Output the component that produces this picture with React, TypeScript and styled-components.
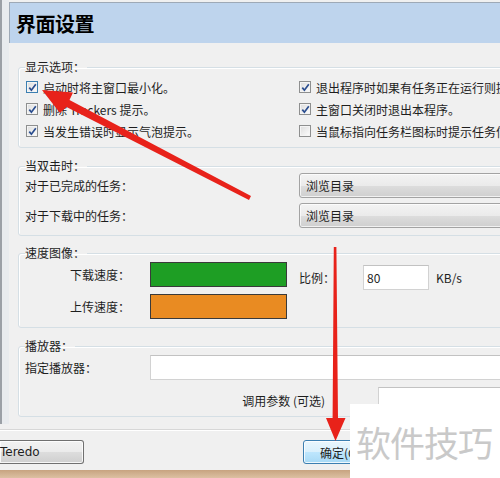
import React from 'react';
import styled, { createGlobalStyle } from 'styled-components';

const Global = createGlobalStyle`
  html, body { margin: 0; padding: 0; width: 500px; height: 478px; overflow: hidden; background: #f0f0f0; }
  body { font-family: "Noto Sans CJK SC", "Microsoft YaHei", sans-serif; font-size: 12px; color: #1e1e1e; }
  * { box-sizing: border-box; }
`;

const Screen = styled.div`
  position: relative;
  width: 500px;
  height: 478px;
  overflow: hidden;
  display: flex;
  flex-direction: column;
  background: #f0f0f0;
`;

const Upper = styled.div`
  display: flex;
  height: 429px;
  flex-shrink: 0;
`;

const Frame = styled.div`
  width: 9px;
  flex-shrink: 0;
  height: 424px;
  background: linear-gradient(to right, #9ba0a6 0, #9ba0a6 2px, #e8ebee 2px, #e8ebee 100%);
`;

const Main = styled.div`
  width: 640px;
  flex-shrink: 0;
  display: flex;
  flex-direction: column;
  padding-top: 2px;
`;

const Header = styled.div`
  height: 41px;
  border-top: 1px solid #9ea9b6;
  border-left: 1px solid #9ea9b6;
  background: #bed4ed;
  display: flex;
  align-items: center;
  padding-left: 6px;
  font-size: 20px;
  font-weight: bold;
  color: #000;
  letter-spacing: -0.5px;
`;

const Body = styled.div`
  padding-left: 9px;
  display: flex;
  flex-direction: column;
`;

const Group = styled.fieldset<{ $mt: number; $pt: number; $pb: number }>`
  margin: ${(p) => p.$mt}px 0 0 0;
  border: 1px solid #d5dfe5;
  border-radius: 3px;
  padding: ${(p) => p.$pt}px 0 ${(p) => p.$pb}px 6px;
  box-shadow: inset 1px 1px 0 #fff;
  min-width: 0;
`;

const Legend = styled.legend`
  padding: 0 2px 0 0;
  margin-left: 0;
  line-height: 14px;
  font-size: 12px;
  color: #1e1e1e;
`;

const CheckGrid = styled.div`
  display: grid;
  grid-template-columns: 273px 320px;
  grid-auto-rows: 22px;
  align-items: center;
`;

const CheckItem = styled.label`
  display: flex;
  align-items: center;
  gap: 5px;
  padding-left: 1px;
  white-space: nowrap;
`;

const Box = styled.span<{ $focus?: boolean }>`
  width: 12px;
  height: 12px;
  border: 1px solid ${(p) => (p.$focus ? '#3c7fb1' : '#8e8f8f')};
  background: linear-gradient(135deg, #dcdcdc, #fdfdfd);
  box-shadow: inset 0 0 0 1px #f4f4f4;
  display: inline-flex;
  align-items: center;
  justify-content: center;
  flex-shrink: 0;
`;

const Check = () => (
  <svg width="9" height="9" viewBox="0 0 9 9">
    <path d="M1.3 4.6 L3.4 7.2 L7.8 1.2" fill="none" stroke="#2a4d8f" strokeWidth="1.7" />
  </svg>
);

const CheckBox = ({ checked, focus, label }: { checked: boolean; focus?: boolean; label: string }) => (
  <CheckItem>
    <Box $focus={focus}>{checked && <Check />}</Box>
    <span>{label}</span>
  </CheckItem>
);

const FormGrid = styled.div`
  display: grid;
  grid-template-columns: 274px 320px;
  grid-auto-rows: 25px;
  row-gap: 5px;
  align-items: center;
`;

const Select = styled.div`
  height: 25px;
  border: 1px solid #a3a3a3;
  border-radius: 3px;
  background: linear-gradient(#f3f3f3 0%, #ebebeb 50%, #dddddd 51%, #cfcfcf 100%);
  box-shadow: inset 0 0 0 1px rgba(255, 255, 255, 0.7);
  display: flex;
  align-items: center;
  padding-left: 6px;
`;

const SpeedRows = styled.div`
  display: flex;
  flex-direction: column;
  gap: 7px;
`;

const SpeedRow = styled.div`
  display: flex;
  align-items: center;
  height: 25px;
`;

const SpeedLabel = styled.span`
  width: 105px;
  text-align: right;
  margin-right: 20px;
`;

const Swatch = styled.div<{ $color: string }>`
  width: 137px;
  height: 25px;
  border: 1px solid #3a3a3a;
  background: ${(p) => p.$color};
`;

const RatioLabel = styled.span`
  margin-left: 12px;
  width: 64px;
  position: relative;
  top: 3px;
`;

const TextInput = styled.div<{ $w: number }>`
  width: ${(p) => p.$w}px;
  height: 25px;
  background: #fff;
  border: 1px solid #d2d2d2;
  border-top-color: #c2c2c2;
  display: flex;
  align-items: center;
  padding-left: 3px;
  flex-shrink: 0;
`;

const RatioInput = styled(TextInput)`
  position: relative;
  top: 3px;
`;

const Unit = styled.span`
  margin-left: 7px;
  position: relative;
  top: 3px;
`;

const PlayerRows = styled.div`
  display: flex;
  flex-direction: column;
  gap: 7px;
`;

const PlayerRow = styled.div`
  display: flex;
  align-items: center;
  height: 25px;
`;

const PlayerLabel = styled.span`
  width: 125px;
`;

const ParamLabel = styled.span`
  width: 300px;
  text-align: right;
  margin-right: 53px;
  position: relative;
  top: 1px;
`;

const Footer = styled.div`
  height: 41px;
  flex-shrink: 0;
  border-top: 1px solid #d7d7d7;
  box-shadow: inset 0 1px 0 #fff;
  display: flex;
  align-items: flex-start;
  padding-top: 10px;
`;

const Button = styled.div<{ $default?: boolean; $w: number }>`
  width: ${(p) => p.$w}px;
  height: 24px;
  border: 1px solid ${(p) => (p.$default ? '#3c7fb1' : '#707070')};
  border-radius: 3px;
  background: ${(p) =>
    p.$default
      ? 'linear-gradient(#eaf6fd 0%, #d9f0fc 50%, #bee6fd 51%, #a7d9f5 100%)'
      : 'linear-gradient(#f2f2f2 0%, #ebebeb 50%, #dddddd 51%, #cfcfcf 100%)'};
  box-shadow: inset 0 0 0 1px rgba(255, 255, 255, 0.8);
  display: flex;
  align-items: center;
  font-size: 12px;
  flex-shrink: 0;
`;

const TeredoButton = styled(Button)`
  border-left: none;
  border-top-left-radius: 0;
  border-bottom-left-radius: 0;
  padding-left: 0;
  font-family: "DejaVu Sans", "Noto Sans", sans-serif;
`;

const OkButton = styled(Button)`
  margin-left: 219px;
  padding-left: 16px;
`;

const BottomStrip = styled.div`
  flex: 1;
  background: linear-gradient(#c7a380, #dcc0a2);
`;

const Watermark = styled.div`
  position: absolute;
  left: 350px;
  top: 404px;
  width: 150px;
  height: 74px;
  background: #fff;
  display: flex;
  align-items: center;
  padding-left: 6px;
  font-size: 35px;
  color: #c9c9c9;
  letter-spacing: -1px;
  font-family: "Noto Sans CJK SC", sans-serif;
`;

const Overlay = styled.svg`
  position: absolute;
  left: 0;
  top: 0;
  pointer-events: none;
`;

export default function App() {
  return (
    <Screen>
      <Global />
      <Upper>
        <Frame />
        <Main>
          <Header>界面设置</Header>
          <Body>
            <Group $mt={17} $pt={2} $pb={5}>
              <Legend>显示选项：</Legend>
              <CheckGrid>
                <CheckBox checked focus label="启动时将主窗口最小化。" />
                <CheckBox checked label="退出程序时如果有任务正在运行则提示。" />
                <CheckBox checked label="删除 Trackers 提示。" />
                <CheckBox checked label="主窗口关闭时退出本程序。" />
                <CheckBox checked label="当发生错误时显示气泡提示。" />
                <CheckBox checked={false} label="当鼠标指向任务栏图标时提示任务信息。" />
              </CheckGrid>
            </Group>
            <Group $mt={11} $pt={0} $pb={7}>
              <Legend>当双击时：</Legend>
              <FormGrid>
                <span>对于已完成的任务：</span>
                <Select>浏览目录</Select>
                <span>对于下载中的任务：</span>
                <Select>浏览目录</Select>
              </FormGrid>
            </Group>
            <Group $mt={10} $pt={2} $pb={8}>
              <Legend>速度图像：</Legend>
              <SpeedRows>
                <SpeedRow>
                  <SpeedLabel>下载速度：</SpeedLabel>
                  <Swatch $color="#1e9e24" />
                  <RatioLabel>比例：</RatioLabel>
                  <RatioInput $w={66}>80</RatioInput>
                  <Unit>KB/s</Unit>
                </SpeedRow>
                <SpeedRow>
                  <SpeedLabel>上传速度：</SpeedLabel>
                  <Swatch $color="#e98b22" />
                </SpeedRow>
              </SpeedRows>
            </Group>
            <Group $mt={11} $pt={2} $pb={4}>
              <Legend>播放器：</Legend>
              <PlayerRows>
                <PlayerRow>
                  <PlayerLabel>指定播放器：</PlayerLabel>
                  <TextInput $w={420} />
                </PlayerRow>
                <PlayerRow>
                  <ParamLabel>调用参数 (可选)</ParamLabel>
                  <TextInput $w={200} />
                </PlayerRow>
              </PlayerRows>
            </Group>
          </Body>
        </Main>
      </Upper>
      <Footer>
        <TeredoButton $w={84}>Teredo</TeredoButton>
        <OkButton $default $w={76}>确定(O)</OkButton>
      </Footer>
      <BottomStrip />
      <Watermark>软件技巧</Watermark>
      <Overlay width="500" height="478" viewBox="0 0 500 478">
        <polygon
          points="251,196 69.5,100 73,92.5 42,90 60,113 66.5,107 249,200"
          fill="#e8221a"
        />
        <polygon
          points="333.8,247 336.4,247 338,418 345.5,418 335.5,441 326,418 332.6,418"
          fill="#e8221a"
        />
      </Overlay>
    </Screen>
  );
}
